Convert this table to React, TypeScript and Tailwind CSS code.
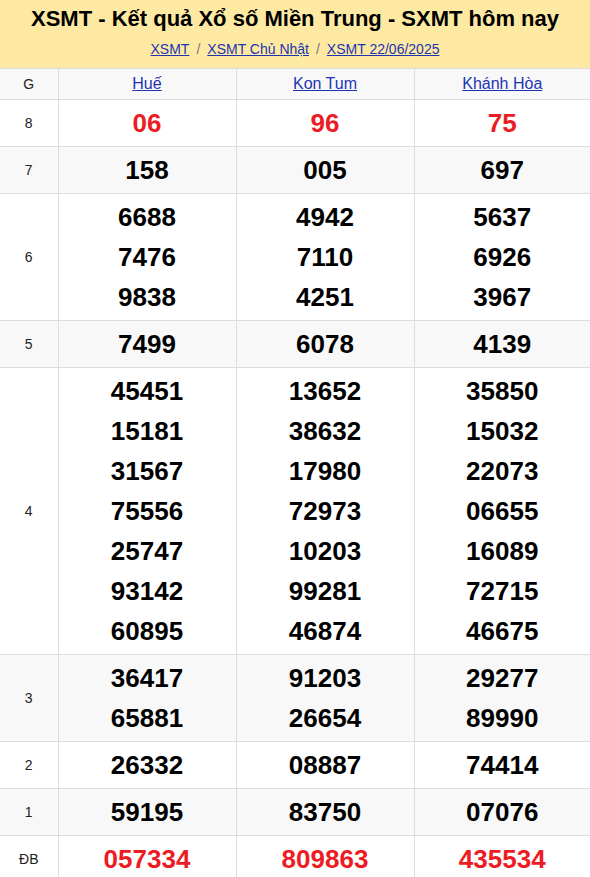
const provinces = ["Huế", "Kon Tum", "Khánh Hòa"];

const prizes: { label: string; values: string[][]; red?: boolean }[] = [
  { label: "8", values: [["06"], ["96"], ["75"]], red: true },
  { label: "7", values: [["158"], ["005"], ["697"]] },
  {
    label: "6",
    values: [
      ["6688", "7476", "9838"],
      ["4942", "7110", "4251"],
      ["5637", "6926", "3967"],
    ],
  },
  { label: "5", values: [["7499"], ["6078"], ["4139"]] },
  {
    label: "4",
    values: [
      ["45451", "15181", "31567", "75556", "25747", "93142", "60895"],
      ["13652", "38632", "17980", "72973", "10203", "99281", "46874"],
      ["35850", "15032", "22073", "06655", "16089", "72715", "46675"],
    ],
  },
  {
    label: "3",
    values: [
      ["36417", "65881"],
      ["91203", "26654"],
      ["29277", "89990"],
    ],
  },
  { label: "2", values: [["26332"], ["08887"], ["74414"]] },
  { label: "1", values: [["59195"], ["83750"], ["07076"]] },
  { label: "ĐB", values: [["057334"], ["809863"], ["435534"]], red: true },
];

export default function App() {
  return (
    <div className="w-[590px] bg-white font-['Liberation_Sans',Arial,sans-serif] text-[#111]">
      <div className="h-[68px] bg-[#fee9a2] flex flex-col items-center pt-[4px]">
        <h1 className="text-[22px] font-bold leading-[30px] text-black">
          XSMT - Kết quả Xổ số Miền Trung - SXMT hôm nay
        </h1>
        <div className="mt-[5px] flex items-center gap-[7px] text-[14px] leading-[20px]">
          <a href="#" className="text-[#1c34b4] underline">XSMT</a>
          <span className="text-[#777]">/</span>
          <a href="#" className="text-[#1c34b4] underline">XSMT Chủ Nhật</a>
          <span className="text-[#777]">/</span>
          <a href="#" className="text-[#1c34b4] underline">XSMT 22/06/2025</a>
        </div>
      </div>
      <table className="w-[590px] table-fixed border-collapse">
        <colgroup>
          <col className="w-[58px]" />
          <col className="w-[178px]" />
          <col className="w-[178px]" />
          <col className="w-[176px]" />
        </colgroup>
        <thead>
          <tr className="bg-[#f8f8f8] h-[31px]">
            <th className="border border-l-0 border-[#dddde1] text-[14px] font-normal text-[#222]">G</th>
            {provinces.map((p) => (
              <th key={p} className="border border-r-0 border-[#dddde1] font-normal text-[16px] last:border-r-0">
                <a href="#" className="text-[#1c34b4] underline">{p}</a>
              </th>
            ))}
          </tr>
        </thead>
        <tbody>
          {prizes.map((row, i) => (
            <tr key={row.label} className={i % 2 === 1 ? "bg-[#f8f8f8]" : "bg-white"}>
              <td className="border border-l-0 border-[#dddde1] text-center text-[14px] text-[#222]">{row.label}</td>
              {row.values.map((col, j) => (
                <td key={j} className="border border-r-0 border-[#dddde1] py-[3px] text-center">
                  {col.map((n, k) => (
                    <div
                      key={k}
                      className={`text-[26px] font-bold leading-[40px] ${row.red ? "text-[#ed1c24]" : "text-black"}`}
                    >
                      {n}
                    </div>
                  ))}
                </td>
              ))}
            </tr>
          ))}
        </tbody>
      </table>
    </div>
  );
}
